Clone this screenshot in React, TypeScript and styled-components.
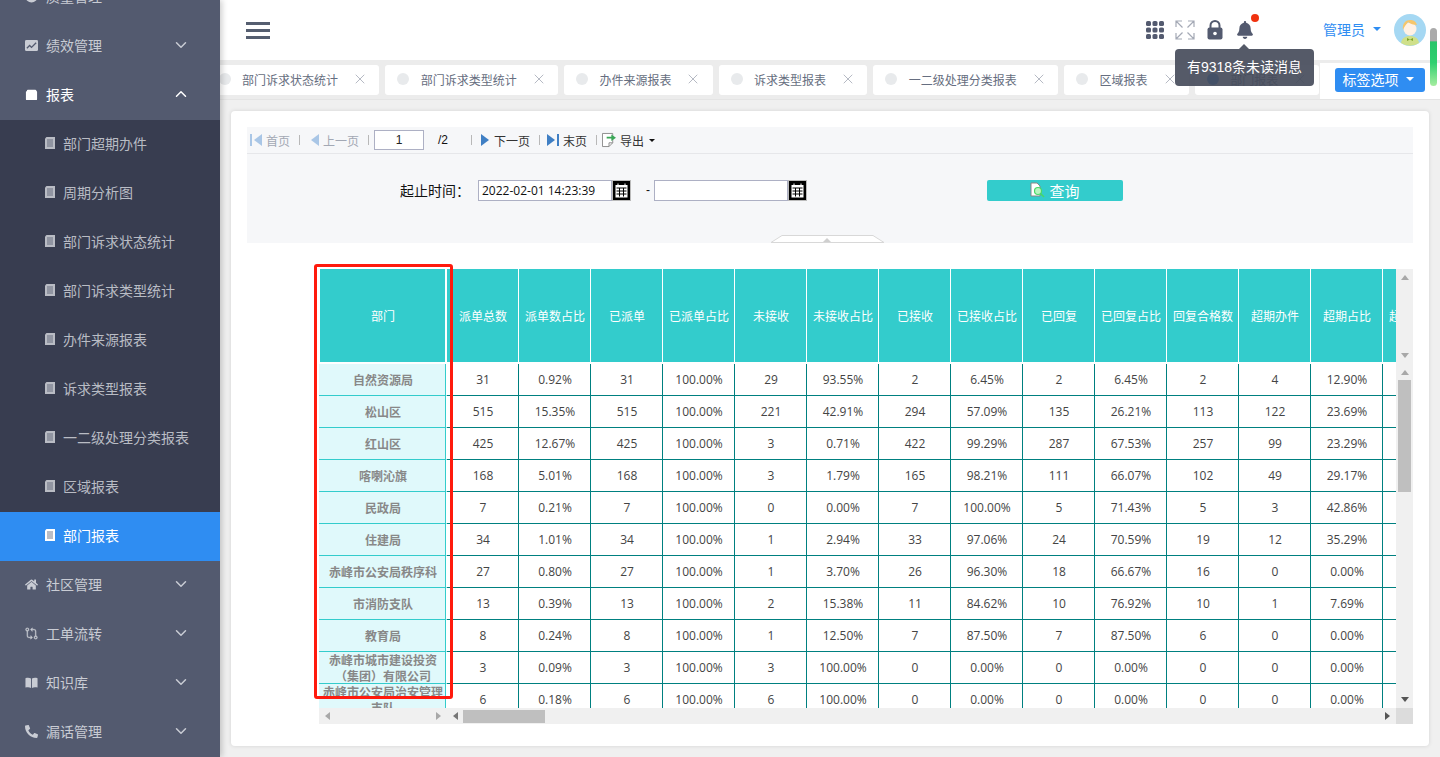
import React from 'react'
import styled, { createGlobalStyle } from 'styled-components'
import { FaBell, FaHome, FaPhone } from 'react-icons/fa'
import { FiChevronDown, FiChevronUp, FiX } from 'react-icons/fi'
import { GoGitCompare } from 'react-icons/go'

const CJK = '"Noto Sans CJK SC", sans-serif'

const GlobalStyle = createGlobalStyle`
  html, body { margin: 0; padding: 0; height: 100%; overflow: hidden; }
  body { font-family: "Liberation Sans", ${CJK}; background: #f0f0f0; }
  * { box-sizing: border-box; }
`

const Page = styled.div`
  position: relative;
  display: flex;
  width: 1440px;
  height: 757px;
  overflow: hidden;
`

const Sidebar = styled.aside`
  position: relative;
  z-index: 3;
  flex: 0 0 220px;
  height: 100%;
  overflow: hidden;
  background: #535a6f;
  box-shadow: 2px 0 6px rgba(0, 0, 0, 0.2);
`

const Menu = styled.nav`
  margin-top: -27px;
`

const MenuItem = styled.div<{ $open?: boolean }>`
  display: flex;
  align-items: center;
  height: 49px;
  padding: 0 30px 3px 25px;
  font-size: 14px;
  color: ${p => (p.$open ? '#fff' : '#c9ccd4')};
  svg.lead { width: 13px; height: 13px; margin-right: 8px; flex: none; }
  span { flex: 1; }
  svg.chev { width: 18px; height: 18px; }
`

const CompareIcon = styled(GoGitCompare)`
  stroke: currentColor;
  stroke-width: 0.6;
`

const SubMenu = styled.div`
  background: #383d50;
`

const SubItem = styled.div<{ $active?: boolean }>`
  display: flex;
  align-items: center;
  height: 49px;
  padding: 0 0 3px 45px;
  font-size: 14px;
  color: ${p => (p.$active ? '#fff' : '#b9bcc4')};
  background: ${p => (p.$active ? '#2f8df2' : 'transparent')};
  svg { margin-right: 8px; }
`

const Main = styled.main`
  flex: 1;
  min-width: 0;
  display: flex;
  flex-direction: column;
`

const TopBar = styled.header`
  position: relative;
  flex: 0 0 60px;
  display: flex;
  align-items: center;
  padding: 0 14px 0 26px;
  background: #fff;
`

const Burger = styled.div`
  display: flex;
  flex-direction: column;
  gap: 4px;
  width: 24px;
  i { display: block; height: 3px; background: #555e70; }
`

const TopIcons = styled.div`
  margin-left: auto;
  display: flex;
  align-items: center;
  color: #535a6f;
`

const IconSlot = styled.div<{ $w: number }>`
  position: relative;
  display: flex;
  justify-content: center;
  width: ${p => p.$w}px;
`

const RedDot = styled.i`
  position: absolute;
  top: -7px;
  right: 7px;
  width: 8px;
  height: 8px;
  border-radius: 50%;
  background: #f0320f;
`

const UserName = styled.div`
  display: flex;
  align-items: center;
  margin-left: 57px;
  margin-right: 13px;
  padding-bottom: 2px;
  font-size: 14px;
  color: #2f8df2;
`

const Caret = styled.i<{ $c?: string; $s?: number; $ml?: number }>`
  display: inline-block;
  margin-left: ${p => p.$ml ?? 8}px;
  border-left: ${p => p.$s ?? 4}px solid transparent;
  border-right: ${p => p.$s ?? 4}px solid transparent;
  border-top: ${p => p.$s ?? 4}px solid ${p => p.$c ?? '#2f8df2'};
`

const Tooltip = styled.div`
  position: absolute;
  z-index: 5;
  left: 955px;
  top: 49px;
  width: 139px;
  height: 37px;
  border-radius: 4px;
  background: rgba(70, 76, 91, 0.92);
  color: #fff;
  font-size: 14px;
  line-height: 36px;
  text-align: center;
  &::before {
    content: '';
    position: absolute;
    left: 64px;
    top: -5px;
    border-left: 5px solid transparent;
    border-right: 5px solid transparent;
    border-bottom: 5px solid rgba(70, 76, 91, 0.92);
  }
`

const ScrollOverlay = styled.div`
  position: absolute;
  z-index: 6;
  left: 1430px;
  top: 28px;
  width: 7px;
  height: 58px;
  border-radius: 4px;
  background: linear-gradient(#aaaaaa 0, #aaaaaa 22%, #27c56a 24%, #2fd070 60%, #a6eda0 100%);
`

const TabsBar = styled.div`
  flex: 0 0 40px;
  display: flex;
  background: #ececec;
  border-bottom: 1px solid #e4e4e4;
`

const TabList = styled.div`
  flex: 0 0 1100px;
  display: flex;
  gap: 6px;
  padding-top: 5px;
  overflow: hidden;
`

const Tab = styled.div<{ $first?: boolean }>`
  flex: none;
  display: flex;
  align-items: center;
  height: 30px;
  margin-left: ${p => (p.$first ? '-13.5px' : 0)};
  padding: 0 11.2px 2px 12px;
  border-radius: 3px;
  background: #fff;
  font-size: 12px;
  color: #666e80;
  span { margin-right: 14px; }
  svg { width: 16px; height: 16px; stroke-width: 1.5; color: #b6bac4; }
`

const TabDot = styled.i<{ $active?: boolean }>`
  flex: none;
  width: 12px;
  height: 12px;
  margin-right: 11.5px;
  border-radius: 50%;
  background: ${p => (p.$active ? '#2f8df2' : '#e8eaec')};
`

const TabOptions = styled.div`
  flex: 1;
  display: flex;
  align-items: center;
  margin-top: 3px;
  padding: 0 15px 3px;
  background: #fff;
`

const TabOptionsBtn = styled.div`
  display: flex;
  align-items: center;
  justify-content: center;
  width: 90px;
  height: 24px;
  padding: 0 4px 1px 0;
  border-radius: 3px;
  background: #2f8df2;
  color: #fff;
  font-size: 14px;
`

const Content = styled.div`
  flex: 1;
  min-height: 0;
  padding: 11px 11px 11px;
`

const Card = styled.section`
  height: 100%;
  padding: 16px;
  border-radius: 4px;
  background: #fff;
  box-shadow: 0 0 4px rgba(0, 0, 0, 0.12);
`

const Toolbar = styled.div`
  display: flex;
  align-items: center;
  height: 27px;
  padding-left: 3px;
  background: #f6f7f9;
  border-bottom: 1px solid #e6e7ea;
  font-size: 12px;
`

const PagerBtn = styled.div<{ $off?: boolean }>`
  display: flex;
  align-items: center;
  gap: 4px;
  color: ${p => (p.$off ? '#a3a8b4' : '#333')};
  svg { display: block; flex: none; }
`

const Sep = styled.i<{ $r?: number }>`
  width: 1px;
  height: 10px;
  margin: 0 ${p => p.$r ?? 9}px 0 9px;
  background: #b8b8b8;
`

const PageInput = styled.div`
  width: 50px;
  height: 20px;
  margin-left: -4px;
  border: 1px solid #adb0c4;
  background: #fff;
  font-size: 12px;
  line-height: 18px;
  text-align: center;
  color: #222;
`

const PageTotal = styled.div`
  width: 25px;
  margin-left: 14px;
  margin-right: -1px;
  color: #111;
`

const QueryPanel = styled.div`
  position: relative;
  display: flex;
  align-items: center;
  height: 89px;
  padding: 0 0 17px 153px;
  background: #f6f7f9;
`

const QueryLabel = styled.div`
  width: 78px;
  font-size: 14px;
  color: #111;
`

const DateField = styled.div`
  width: 134px;
  height: 21px;
  padding-left: 3px;
  border: 1px solid #adb0c4;
  background: #fff;
  font-family: "Open Sans", ${CJK};
  font-size: 12px;
  line-height: 19px;
  color: #111;
`

const CalendarBtn = styled.div`
  display: flex;
  align-items: center;
  justify-content: center;
  width: 19px;
  height: 21px;
  background: #000;
  border: 1px solid #bbb;
`

const Dash = styled.div`
  width: 23px;
  padding-left: 15px;
  font-size: 12px;
  color: #111;
`

const QueryBtn = styled.div`
  display: flex;
  align-items: center;
  justify-content: center;
  gap: 3px;
  width: 136px;
  height: 21px;
  margin-left: 180px;
  border-radius: 2px;
  background: #33cccc;
  color: #fff;
  font-size: 15px;
`

const CollapseHandle = styled.div`
  position: absolute;
  left: 523px;
  bottom: 0;
  width: 115px;
  height: 8px;
  svg { display: block; }
`

const TableSection = styled.div`
  padding: 26px 0 0 72px;
`

const TableFrame = styled.div`
  position: relative;
  display: grid;
  grid-template-columns: 1077px 17px;
  grid-template-rows: 439px 16px;
`

const TableClip = styled.div`
  overflow: hidden;
`

const Report = styled.table`
  width: 1136px;
  table-layout: fixed;
  border-collapse: separate;
  border-spacing: 0;
  font-size: 12px;
  font-family: "Open Sans", ${CJK};
  color: #444;
  th {
    height: 95px;
    padding: 0 0 0 1px;
    background: #33cccc;
    border-right: 1px solid #fff;
    border-bottom: 2px solid #fff;
    color: #fff;
    font-weight: 400;
    white-space: nowrap;
    overflow: hidden;
  }
  th:first-child {
    border-left: 1px solid #fff;
    border-right: 2px solid #fff;
  }
  td {
    height: 32px;
    padding: 1px 0 0 1px;
    border-right: 1px solid #008080;
    border-bottom: 1px solid #008080;
    text-align: center;
    line-height: 16px;
  }
  td:first-child {
    background: #e0f9fb;
    border-right: 1px solid #fff;
    border-bottom: 1px solid #33cccc;
    box-shadow: inset -1px 0 0 #33cccc;
    color: #888;
    font-weight: 700;
  }
`

const DeptName = styled.div`
  display: flex;
  align-items: center;
  justify-content: center;
  height: 30px;
  padding: 2px 0 0;
`

const VScroll = styled.div`
  display: flex;
  flex-direction: column;
  background: #f0f0f0;
`

const VHeadPart = styled.div`
  flex: 0 0 95px;
  display: flex;
  flex-direction: column;
  align-items: center;
  justify-content: space-between;
  padding: 6px 0 6px;
`

const VBodyPart = styled.div`
  flex: 1;
  display: flex;
  flex-direction: column;
  align-items: center;
  padding: 6px 0 6px;
`

const VThumb = styled.div`
  width: 13px;
  height: 112px;
  margin-top: 5px;
  background: #bfbfbf;
`

const Arrow = styled.i<{ $dir: 'up' | 'down' | 'left' | 'right'; $c?: string }>`
  display: block;
  width: 0;
  height: 0;
  border: 4px solid transparent;
  ${p => {
    const c = p.$c ?? '#a8a8a8'
    if (p.$dir === 'up') return `border-top: 0; border-bottom: 5px solid ${c};`
    if (p.$dir === 'down') return `border-bottom: 0; border-top: 5px solid ${c};`
    if (p.$dir === 'left') return `border-left: 0; border-right: 5px solid ${c};`
    return `border-right: 0; border-left: 5px solid ${c};`
  }}
`

const VSpacer = styled.div`
  margin-top: auto;
`

const HScroll = styled.div`
  display: flex;
  background: #f0f0f0;
`

const HFrozen = styled.div`
  flex: 0 0 128px;
  display: flex;
  align-items: center;
  justify-content: space-between;
  padding: 0 6px;
`

const HMain = styled.div`
  flex: 1;
  display: flex;
  align-items: center;
  padding: 0 6px;
`

const HThumb = styled.div`
  width: 82px;
  height: 13px;
  margin-left: 5px;
  background: #bfbfbf;
`

const HRight = styled.div`
  margin-left: auto;
`

const Corner = styled.div`
  background: #dcdcdc;
`

const RedBox = styled.div`
  position: absolute;
  left: -5px;
  top: -5px;
  width: 139px;
  height: 435px;
  border: 3px solid #ff1a0d;
  border-radius: 3px;
  pointer-events: none;
`

const SUBS = ['部门超期办件', '周期分析图', '部门诉求状态统计', '部门诉求类型统计', '办件来源报表', '诉求类型报表', '一二级处理分类报表', '区域报表', '部门报表']

const TABS = ['部门诉求状态统计', '部门诉求类型统计', '办件来源报表', '诉求类型报表', '一二级处理分类报表', '区域报表', '部门报表']

const HEADS = ['部门', '派单总数', '派单数占比', '已派单', '已派单占比', '未接收', '未接收占比', '已接收', '已接收占比', '已回复', '已回复占比', '回复合格数', '超期办件', '超期占比', '超期未办结']

const ROWS = [
  ['自然资源局', '31', '0.92%', '31', '100.00%', '29', '93.55%', '2', '6.45%', '2', '6.45%', '2', '4', '12.90%', ''],
  ['松山区', '515', '15.35%', '515', '100.00%', '221', '42.91%', '294', '57.09%', '135', '26.21%', '113', '122', '23.69%', ''],
  ['红山区', '425', '12.67%', '425', '100.00%', '3', '0.71%', '422', '99.29%', '287', '67.53%', '257', '99', '23.29%', ''],
  ['喀喇沁旗', '168', '5.01%', '168', '100.00%', '3', '1.79%', '165', '98.21%', '111', '66.07%', '102', '49', '29.17%', ''],
  ['民政局', '7', '0.21%', '7', '100.00%', '0', '0.00%', '7', '100.00%', '5', '71.43%', '5', '3', '42.86%', ''],
  ['住建局', '34', '1.01%', '34', '100.00%', '1', '2.94%', '33', '97.06%', '24', '70.59%', '19', '12', '35.29%', ''],
  ['赤峰市公安局秩序科', '27', '0.80%', '27', '100.00%', '1', '3.70%', '26', '96.30%', '18', '66.67%', '16', '0', '0.00%', ''],
  ['市消防支队', '13', '0.39%', '13', '100.00%', '2', '15.38%', '11', '84.62%', '10', '76.92%', '10', '1', '7.69%', ''],
  ['教育局', '8', '0.24%', '8', '100.00%', '1', '12.50%', '7', '87.50%', '7', '87.50%', '6', '0', '0.00%', ''],
  ['赤峰市城市建设投资（集团）有限公司', '3', '0.09%', '3', '100.00%', '3', '100.00%', '0', '0.00%', '0', '0.00%', '0', '0', '0.00%', ''],
  ['赤峰市公安局治安管理支队', '6', '0.18%', '6', '100.00%', '6', '100.00%', '0', '0.00%', '0', '0.00%', '0', '0', '0.00%', ''],
]

const ChartIcon = () => (
  <svg className="lead" viewBox="0 0 14 14">
    <rect x="0" y="1" width="14" height="12" rx="1.5" fill="currentColor" />
    <path d="M2 10l3-3 2 2 5-5" fill="none" stroke="#535a6f" strokeWidth="1.4" />
  </svg>
)

const FolderIcon = () => (
  <svg className="lead" viewBox="0 0 14 14">
    <path d="M2 3.2 Q2 2 3.2 2 H11 Q12 2 12.3 3 L13 4 V12 Q13 13 12 13 H2 Q1 13 1 12 V4Z" fill="#fff" />
  </svg>
)

const CircleIcon = () => (
  <svg className="lead" viewBox="0 0 14 14">
    <circle cx="7" cy="7" r="6.5" fill="currentColor" />
  </svg>
)

const BookIcon = () => (
  <svg className="lead" viewBox="0 0 14 14" fill="currentColor">
    <path d="M0.500 2.500 C2.500 1.700 4.800 1.800 6.500 2.800 V12.800 C4.800 11.800 2.500 11.800 0.500 12.500z" />
    <path d="M13.500 2.500 C11.500 1.700 9.200 1.800 7.500 2.800 V12.800 C9.200 11.800 11.500 11.800 13.500 12.500z" />
  </svg>
)

const DocIcon = () => (
  <svg width="10" height="12" viewBox="0 0 10 12">
    <path d="M0 1.500 L1.500 0 H10 V12 H0z" fill="currentColor" />
    <path d="M2 3h6M2 5h6M2 7h6M2 9h6" stroke="#535a6f" strokeWidth="0.8" />
  </svg>
)

const PhoneIcon = () => <FaPhone className="lead" style={{ transform: 'scaleX(-1)' }} />

const GridIcon = () => (
  <svg width="18" height="18" viewBox="0 0 18 18" fill="#535a6f">
    {[0, 1, 2].flatMap(r =>
      [0, 1, 2].map(c => <rect key={`${r}${c}`} x={c * 6.5} y={r * 6.5} width="5" height="5" rx="1.6" />),
    )}
  </svg>
)

const ExpandIcon = () => (
  <svg width="20" height="20" viewBox="0 0 20 20" fill="none" stroke="#a4a9b5" strokeWidth="1.2">
    <path d="M1 7V1h6M1 1l6.5 6.5M13 1h6v6M19 1l-6.5 6.5M1 13v6h6M1 19l6.5-6.5M19 13v6h-6M19 19l-6.5-6.5" />
  </svg>
)

const LockIcon = () => (
  <svg width="16" height="20" viewBox="0 0 16 20">
    <path d="M3.5 8V5.5a4.5 4.5 0 0 1 9 0V8" fill="none" stroke="#535a6f" strokeWidth="2" />
    <rect x="0.5" y="7.5" width="15" height="12" rx="2" fill="#535a6f" />
    <circle cx="8" cy="13.5" r="1.8" fill="#fff" />
  </svg>
)

const Avatar = () => (
  <svg width="32" height="32" viewBox="0 0 32 32" style={{ display: 'block' }}>
    <circle cx="16" cy="16" r="16" fill="#a5d8f3" />
    <path d="M7 29c1-5 4-7 9-7s8 2 9 7a16 16 0 0 1-18 0z" fill="#cfe08a" />
    <circle cx="16" cy="15" r="6.5" fill="#fff1e4" />
    <path d="M9 16c-1-7 3-10 7-10 3 0 6 1 7 5-3 0-7-1-9-3-1 2-3 3-5 8z" fill="#f6c66b" />
    <path d="M13 24l3 1.500 3-1.500v3l-3-1.500-3 1.500z" fill="#7fa52a" />
  </svg>
)

const EdgeIcon = ({ dir, off }: { dir: 'l' | 'r'; off?: boolean }) => (
  <svg width="12" height="14" viewBox="0 0 12 14" fill={off ? '#a9c6e6' : '#3f7fc4'}>
    {dir === 'l' ? (
      <>
        <rect x="0" y="1" width="2" height="12" />
        <path d="M12 1v12L4 7z" />
      </>
    ) : (
      <>
        <path d="M0 1v12L8 7z" />
        <rect x="10" y="1" width="2" height="12" />
      </>
    )}
  </svg>
)

const StepIcon = ({ dir, off }: { dir: 'l' | 'r'; off?: boolean }) => (
  <svg width="9" height="14" viewBox="0 0 9 14" fill={off ? '#a9c6e6' : '#3f7fc4'}>
    <path d={dir === 'l' ? 'M9 1v12L1 7z' : 'M0 1v12L8 7z'} />
  </svg>
)

const ExportIcon = () => (
  <svg width="14" height="16" viewBox="0 0 15 16">
    <path d="M.5 1h11v10l-4 4H.5z" fill="#fff" stroke="#888" />
    <path d="M7.5 15v-4h4" fill="none" stroke="#888" />
    <path d="M5 4.5h5V2l5 3.5L10 9V6.500H5z" fill="#3aa757" />
  </svg>
)

const CalendarIcon = () => (
  <svg width="13" height="15" viewBox="0 0 13 15">
    <rect x="0.500" y="2" width="12" height="12.500" fill="#fff" />
    <path d="M3 0.500v3M10 0.500v3" stroke="#fff" strokeWidth="1" />
    <path d="M1.500 5h10M1.500 8h10M1.500 11h10M4.500 5v8.500M8.500 5v8.500" stroke="#000" strokeWidth="1" />
  </svg>
)

const SearchDocIcon = () => (
  <svg width="16" height="16" viewBox="0 0 16 16">
    <path d="M1 1h6l3 3v10H1z" fill="#fff" stroke="#888" />
    <circle cx="8" cy="9" r="3.500" fill="#b9f5c0" stroke="#48d868" strokeWidth="1.200" />
    <path d="M10.500 11.500l3.500 3.500" stroke="#48d868" strokeWidth="1.600" />
  </svg>
)

export default function App() {
  return (
    <Page>
      <GlobalStyle />
      <Sidebar>
        <Menu>
          <MenuItem>
            <CircleIcon />
            <span>质量管理</span>
            <FiChevronDown className="chev" />
          </MenuItem>
          <MenuItem>
            <ChartIcon />
            <span>绩效管理</span>
            <FiChevronDown className="chev" />
          </MenuItem>
          <MenuItem $open>
            <FolderIcon />
            <span>报表</span>
            <FiChevronUp className="chev" />
          </MenuItem>
          <SubMenu>
            {SUBS.map(s => (
              <SubItem key={s} $active={s === '部门报表'}>
                <DocIcon />
                {s}
              </SubItem>
            ))}
          </SubMenu>
          <MenuItem>
            <FaHome className="lead" />
            <span>社区管理</span>
            <FiChevronDown className="chev" />
          </MenuItem>
          <MenuItem>
            <CompareIcon className="lead" />
            <span>工单流转</span>
            <FiChevronDown className="chev" />
          </MenuItem>
          <MenuItem>
            <BookIcon />
            <span>知识库</span>
            <FiChevronDown className="chev" />
          </MenuItem>
          <MenuItem>
            <PhoneIcon />
            <span>漏话管理</span>
            <FiChevronDown className="chev" />
          </MenuItem>
        </Menu>
      </Sidebar>
      <Main>
        <TopBar>
          <Burger>
            <i />
            <i />
            <i />
          </Burger>
          <TopIcons>
            <IconSlot $w={18}><GridIcon /></IconSlot>
            <IconSlot $w={42}><ExpandIcon /></IconSlot>
            <IconSlot $w={18}><LockIcon /></IconSlot>
            <IconSlot $w={42}>
              <FaBell size={18} color="#535a6f" />
              <RedDot />
            </IconSlot>
            <UserName>
              管理员
              <Caret />
            </UserName>
            <Avatar />
          </TopIcons>
          <Tooltip>有9318条未读消息</Tooltip>
        </TopBar>
        <TabsBar>
          <TabList>
            {TABS.map((t, i) => (
              <Tab key={t} $first={i === 0}>
                <TabDot $active={i === TABS.length - 1} />
                <span>{t}</span>
                <FiX />
              </Tab>
            ))}
          </TabList>
          <TabOptions>
            <TabOptionsBtn>
              标签选项
              <Caret $c="#fff" $ml={7} />
            </TabOptionsBtn>
          </TabOptions>
        </TabsBar>
        <Content>
          <Card>
            <Toolbar>
              <PagerBtn $off><EdgeIcon dir="l" off />首页</PagerBtn>
              <Sep $r={10} />
              <PagerBtn $off><StepIcon dir="l" off />上一页</PagerBtn>
              <Sep />
              <PageInput>1</PageInput>
              <PageTotal>/2</PageTotal>
              <Sep />
              <PagerBtn><StepIcon dir="r" />下一页</PagerBtn>
              <Sep $r={7} />
              <PagerBtn><EdgeIcon dir="r" />末页</PagerBtn>
              <Sep $r={5} />
              <PagerBtn>
                <ExportIcon />
                导出
                <Caret $c="#111" $s={3} $ml={1} />
              </PagerBtn>
            </Toolbar>
            <QueryPanel>
              <QueryLabel>起止时间：</QueryLabel>
              <DateField>2022-02-01 14:23:39</DateField>
              <CalendarBtn><CalendarIcon /></CalendarBtn>
              <Dash>-</Dash>
              <DateField />
              <CalendarBtn><CalendarIcon /></CalendarBtn>
              <QueryBtn>
                <SearchDocIcon />
                查询
              </QueryBtn>
              <CollapseHandle>
                <svg width="115" height="8" viewBox="0 0 115 8">
                  <path d="M1 7.500 L12 .5 H103 L114 7.500Z" fill="#fff" stroke="#d8d8d8" />
                  <path d="M53 7l4-4 4 4z" fill="#cfcfcf" />
                </svg>
              </CollapseHandle>
            </QueryPanel>
            <TableSection>
              <TableFrame>
                <TableClip>
                  <Report>
                    <colgroup>
                      <col style={{ width: 128 }} />
                      {HEADS.slice(1).map(h => (
                        <col key={h} style={{ width: 72 }} />
                      ))}
                    </colgroup>
                    <thead>
                      <tr>
                        {HEADS.map(h => (
                          <th key={h}>{h}</th>
                        ))}
                      </tr>
                    </thead>
                    <tbody>
                      {ROWS.map(r => (
                        <tr key={r[0]}>
                          {r.map((c, i) => (
                            <td key={i}>{i === 0 ? <DeptName>{c}</DeptName> : c}</td>
                          ))}
                        </tr>
                      ))}
                    </tbody>
                  </Report>
                </TableClip>
                <VScroll>
                  <VHeadPart>
                    <Arrow $dir="up" />
                    <Arrow $dir="down" />
                  </VHeadPart>
                  <VBodyPart>
                    <Arrow $dir="up" />
                    <VThumb />
                    <VSpacer />
                    <Arrow $dir="down" $c="#555" />
                  </VBodyPart>
                </VScroll>
                <HScroll>
                  <HFrozen>
                    <Arrow $dir="left" />
                    <Arrow $dir="right" />
                  </HFrozen>
                  <HMain>
                    <Arrow $dir="left" $c="#777" />
                    <HThumb />
                    <HRight>
                      <Arrow $dir="right" $c="#555" />
                    </HRight>
                  </HMain>
                </HScroll>
                <Corner />
                <RedBox />
              </TableFrame>
            </TableSection>
          </Card>
        </Content>
      </Main>
      <ScrollOverlay />
    </Page>
  )
}
